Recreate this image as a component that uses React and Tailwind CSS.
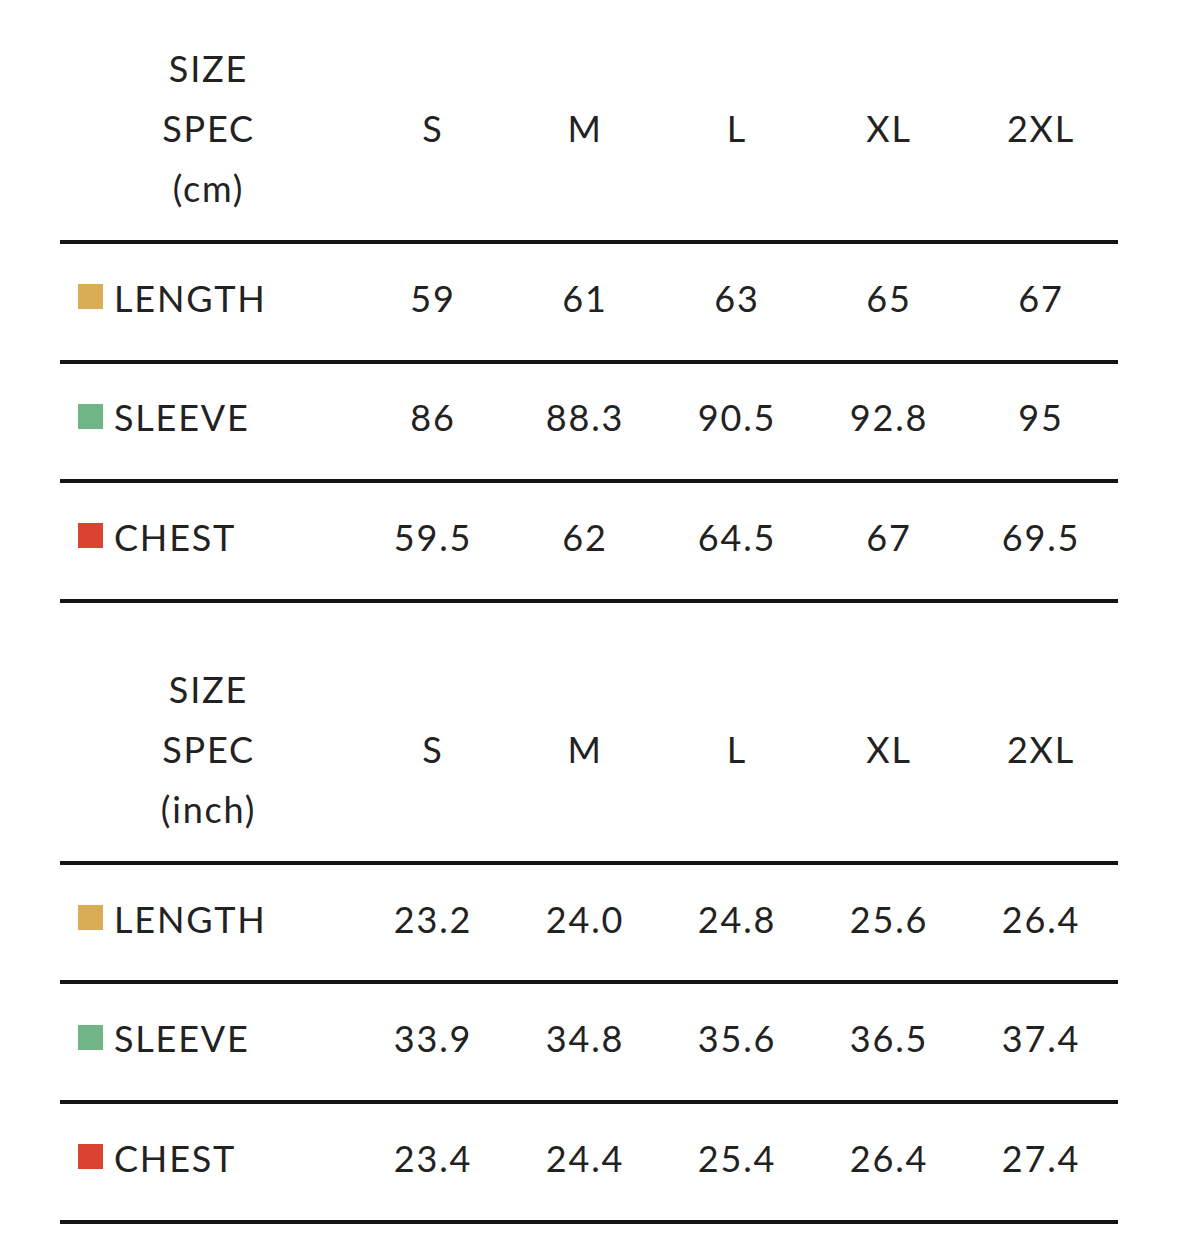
const sizes = ['S', 'M', 'L', 'XL', '2XL']

const tables = [
  {
    unit: 'cm',
    rows: [
      { name: 'LENGTH', color: 'bg-[#d9ad55]', values: ['59', '61', '63', '65', '67'] },
      { name: 'SLEEVE', color: 'bg-[#6fb585]', values: ['86', '88.3', '90.5', '92.8', '95'] },
      { name: 'CHEST', color: 'bg-[#d9432f]', values: ['59.5', '62', '64.5', '67', '69.5'] },
    ],
  },
  {
    unit: 'inch',
    rows: [
      { name: 'LENGTH', color: 'bg-[#d9ad55]', values: ['23.2', '24.0', '24.8', '25.6', '26.4'] },
      { name: 'SLEEVE', color: 'bg-[#6fb585]', values: ['33.9', '34.8', '35.6', '36.5', '37.4'] },
      { name: 'CHEST', color: 'bg-[#d9432f]', values: ['23.4', '24.4', '25.4', '26.4', '27.4'] },
    ],
  },
]

function SpecTable({ unit, rows }) {
  return (
    <div>
      <div className="grid grid-cols-[297px_repeat(5,152px)] items-center pt-[38px] pb-[22px] border-b-4 border-[#141414]">
        <div className="flex flex-col items-center leading-[60px]">
          <span>SIZE</span>
          <span>SPEC</span>
          <span>({unit})</span>
        </div>
        {sizes.map((size) => (
          <div key={size} className="text-center leading-[60px]">
            {size}
          </div>
        ))}
      </div>
      {rows.map((row) => (
        <div
          key={row.name}
          className="grid grid-cols-[297px_repeat(5,152px)] items-center h-[119.6px] pb-[8px] border-b-4 border-[#141414]"
        >
          <div className="flex items-center gap-[11px] pl-[18px]">
            <span className={`w-[25px] h-[25px] mt-[-2px] ${row.color}`} />
            <span>{row.name}</span>
          </div>
          {row.values.map((value, i) => (
            <div key={i} className="text-center">
              {value}
            </div>
          ))}
        </div>
      ))}
    </div>
  )
}

export default function App() {
  return (
    <div
      className="min-h-[1258px] bg-white text-[#222] text-[36px] font-normal tracking-[0.05em]"
      style={{ fontFamily: 'Lato, "Open Sans", sans-serif' }}
    >
      <div className="ml-[60px] w-[1058px] flex flex-col gap-[18px]">
        {tables.map((table) => (
          <SpecTable key={table.unit} {...table} />
        ))}
      </div>
    </div>
  )
}
